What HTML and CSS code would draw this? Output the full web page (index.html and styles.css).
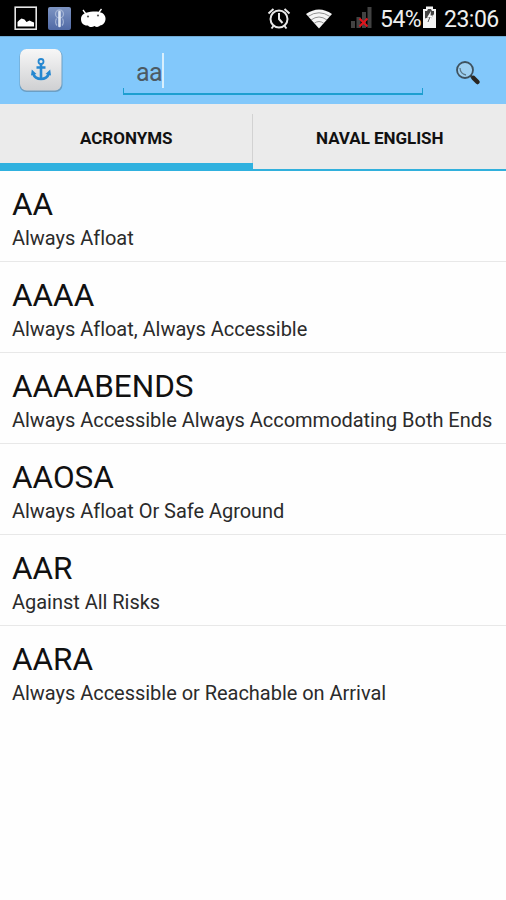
FILE: index.html
```html
<!DOCTYPE html>
<html lang="en">
<head>
<meta charset="utf-8">
<title>Naval Acronyms</title>
<link rel="stylesheet" href="styles.css">
</head>
<body>
<header class="status">
  <svg class="notifications" width="120" height="36" viewBox="0 0 120 36">
    <defs><linearGradient id="app" x2="0" y2="1"><stop stop-color="#7d94c2"/><stop offset="1" stop-color="#5069a5"/></linearGradient></defs>
    <rect x="15.200" y="7.200" width="21" height="22" fill="none" stroke="#e6e6e6" stroke-width="1.600"/>
    <path d="M17.500 26.500V22l2-2 2-1.500 3 1 2 2.500 3-1.500 2 1 2.500 1v4z" fill="#fff"/>
    <rect x="48" y="7" width="23" height="23" rx="2" fill="url(#app)"/>
    <circle cx="59.500" cy="14" r="4" fill="none" stroke="#a3b3d4" stroke-width="1.300"/>
    <path d="M59.500 12v14" stroke="#dde5f3" stroke-width="2.600" stroke-linecap="round"/>
    <path d="M56.500 18.500q-2 4 .5 7M62.500 18.500q2 4-.5 7" fill="none" stroke="#a3b3d4" stroke-width="1.200"/>
    <path d="M83 10l3 4M101.500 9l-3 4" stroke="#fff" stroke-width="1.300"/>
    <path d="M81 19c0-5 5-7 12-7.500S105 13 105.500 18c.3 4-2 7-5.500 7.500-2 2-4 1.500-5.500.5-2 1.500-5 1.500-6.500-.5-4 .5-7-2-7-6.500z" fill="#fff"/>
    <circle cx="88" cy="16.500" r="1.100" fill="#555"/><circle cx="98" cy="15.500" r="1.100" fill="#555"/>
  </svg>
  <div class="indicators">
    <svg width="110" height="36" viewBox="264 0 110 36">
      <g fill="none" stroke="#e8e8e8" stroke-width="2">
        <circle cx="279" cy="19" r="8.500"/>
        <path d="M268.500 13.500l5-4.500M289.500 13.500l-5-4.500M279 13v6l3.500 4M273.500 26l-2 2.500M284.500 26l2 2.500"/>
      </g>
      <path d="M306 14Q319 5 332 14L319 28.500z" fill="#f5f5f5"/>
      <path d="M308 16.500Q319 9 330 16.500M311 20Q319 14 327 20M314 23.500Q319 19.500 324 23.500" fill="none" stroke="#777" stroke-width=".8"/>
      <path d="M351 21h4v7h-4zM356.500 17h4v11h-4zM362 12h4v16h-4zM367.500 7h4v21h-4z" fill="#424242"/>
      <path d="M359.500 18.500l8 8M367.500 18.500l-8 8" stroke="#e0141c" stroke-width="2.200"/>
    </svg>
    <span class="percent">54%</span>
    <svg class="battery" width="15" height="36" viewBox="422 0 15 36">
      <path d="M423 9h3V6.500h7V9h3v19h-13z" fill="#f4f4f4"/>
      <path d="M425 11h2l1-2h3l1 2h2v3l-3 4.500-3-1-3 1z" fill="#444"/>
      <path d="M431 11l-4 6.500h2.500l-1 5 4.500-7h-2.500z" fill="#fff"/>
      <path d="M430 17l-2 5" stroke="#555"/>
    </svg>
    <span class="clock">23:06</span>
  </div>
</header>
<div class="toolbar">
  <svg class="logo" width="46" height="46" viewBox="18 47 46 46">
    <defs><linearGradient id="key" x2="0" y2="1"><stop stop-color="#f7f7f7"/><stop offset="1" stop-color="#cfd0d2"/></linearGradient></defs>
    <rect x="19.500" y="49.500" width="43" height="42.500" rx="7" fill="#6c9fc4"/>
    <rect x="20" y="49" width="41.500" height="41.500" rx="6.500" fill="url(#key)"/>
    <g fill="none" stroke="#2587d0" stroke-width="2.600">
      <circle cx="41" cy="61.500" r="2.500" stroke-width="1.800"/>
      <path d="M41 64v15M36.500 67.500h9M33 73.500c1.500 4 4 5.500 8 5.500s6.500-1.500 8-5.500"/>
    </g>
    <path d="M31 75.500l.8-6 4.700 4.500zM51 75.500l-.8-6-4.700 4.500z" fill="#2587d0"/>
  </svg>
  <div class="field"><span class="query">aa</span><span class="caret"></span></div>
  <svg class="search" width="28" height="28" viewBox="454 59 28 28">
    <circle cx="465" cy="70" r="8" fill="#9dd0f2" stroke="#3e525f" stroke-width="1.800"/>
    <path d="M460 68c0 4 3 6.500 6 7" fill="none" stroke="#5c7888" stroke-width="1.300"/>
    <path d="M470.500 75.500l3 3" stroke="#39444a" stroke-width="2.500"/>
    <path d="M473.500 78l4 4" stroke="#292621" stroke-width="4.500" stroke-linecap="round"/>
  </svg>
</div>
<nav class="tabs">
  <div class="tab active">ACRONYMS</div>
  <div class="tab">NAVAL ENGLISH</div>
</nav>
<main class="list">
  <section class="row"><h2 class="term">AA</h2><p class="meaning">Always Afloat</p></section>
  <section class="row"><h2 class="term">AAAA</h2><p class="meaning">Always Afloat, Always Accessible</p></section>
  <section class="row"><h2 class="term">AAAABENDS</h2><p class="meaning">Always Accessible Always Accommodating Both Ends</p></section>
  <section class="row"><h2 class="term">AAOSA</h2><p class="meaning">Always Afloat Or Safe Aground</p></section>
  <section class="row"><h2 class="term">AAR</h2><p class="meaning">Against All Risks</p></section>
  <section class="row"><h2 class="term">AARA</h2><p class="meaning">Always Accessible or Reachable on Arrival</p></section>
</main>
</body>
</html>
```
FILE: styles.css
```css
* { box-sizing: border-box; }
body { margin: 0; width: 506px; height: 900px; overflow: hidden; background: #fefefe; color: #111; font-family: Roboto, sans-serif; }
svg { display: block; flex: none; }
.status { height: 36px; background: #000; display: flex; justify-content: space-between; color: #eee; font-size: 23px; line-height: 39px; }
.indicators { display: flex; padding-right: 7px; white-space: nowrap; }
.percent { width: 48px; margin-left: 6px; letter-spacing: -0.5px; }
.percent + .battery { margin-left: -6px; }
.clock { margin-left: 7px; width: 55px; letter-spacing: -0.5px; }
.toolbar { height: 68px; background: #82c8fb; border-top: 1px solid #70a9d2; display: flex; align-items: flex-start; }
.logo { margin: 10px 0 0 18px; }
.field { width: 300px; height: 42px; margin: 16px 0 0 59px; padding-left: 13px; display: flex; border-bottom: 2px solid #1d9fd0; background: linear-gradient(#1d9fd0, #1d9fd0) left bottom / 1px 5px no-repeat, linear-gradient(#1d9fd0, #1d9fd0) right bottom / 1px 5px no-repeat; }
.query { font-size: 25px; line-height: 40px; color: #4c5a63; letter-spacing: -0.5px; }
.caret { width: 2px; height: 35px; background: #d9effc; }
.search { margin: 22px 0 0 31px; }
.tabs { height: 67px; display: flex; background: #ebebeb; }
.tab { flex: 1; text-align: center; font-weight: 700; font-size: 17px; line-height: 69px; border-bottom: 2px solid #31b0dc; }
.tab.active { border-bottom: 8px solid #2fb1df; background: linear-gradient(#d2d2d2, #d2d2d2) right 10px / 1px 50px no-repeat; }
.tab + .tab { padding-left: 1px; letter-spacing: -0.05px; }
.row { height: 91px; padding: 15px 0 0 12px; border-bottom: 1px solid #e8e8e8; white-space: nowrap; }
.row:last-child { border: 0; }
.term { margin: 0; font-size: 31.500px; line-height: 38px; font-weight: 400; }
.meaning { margin: 0; font-size: 20px; line-height: 28px; color: #2b2b2b; letter-spacing: -0.03px; }
```
